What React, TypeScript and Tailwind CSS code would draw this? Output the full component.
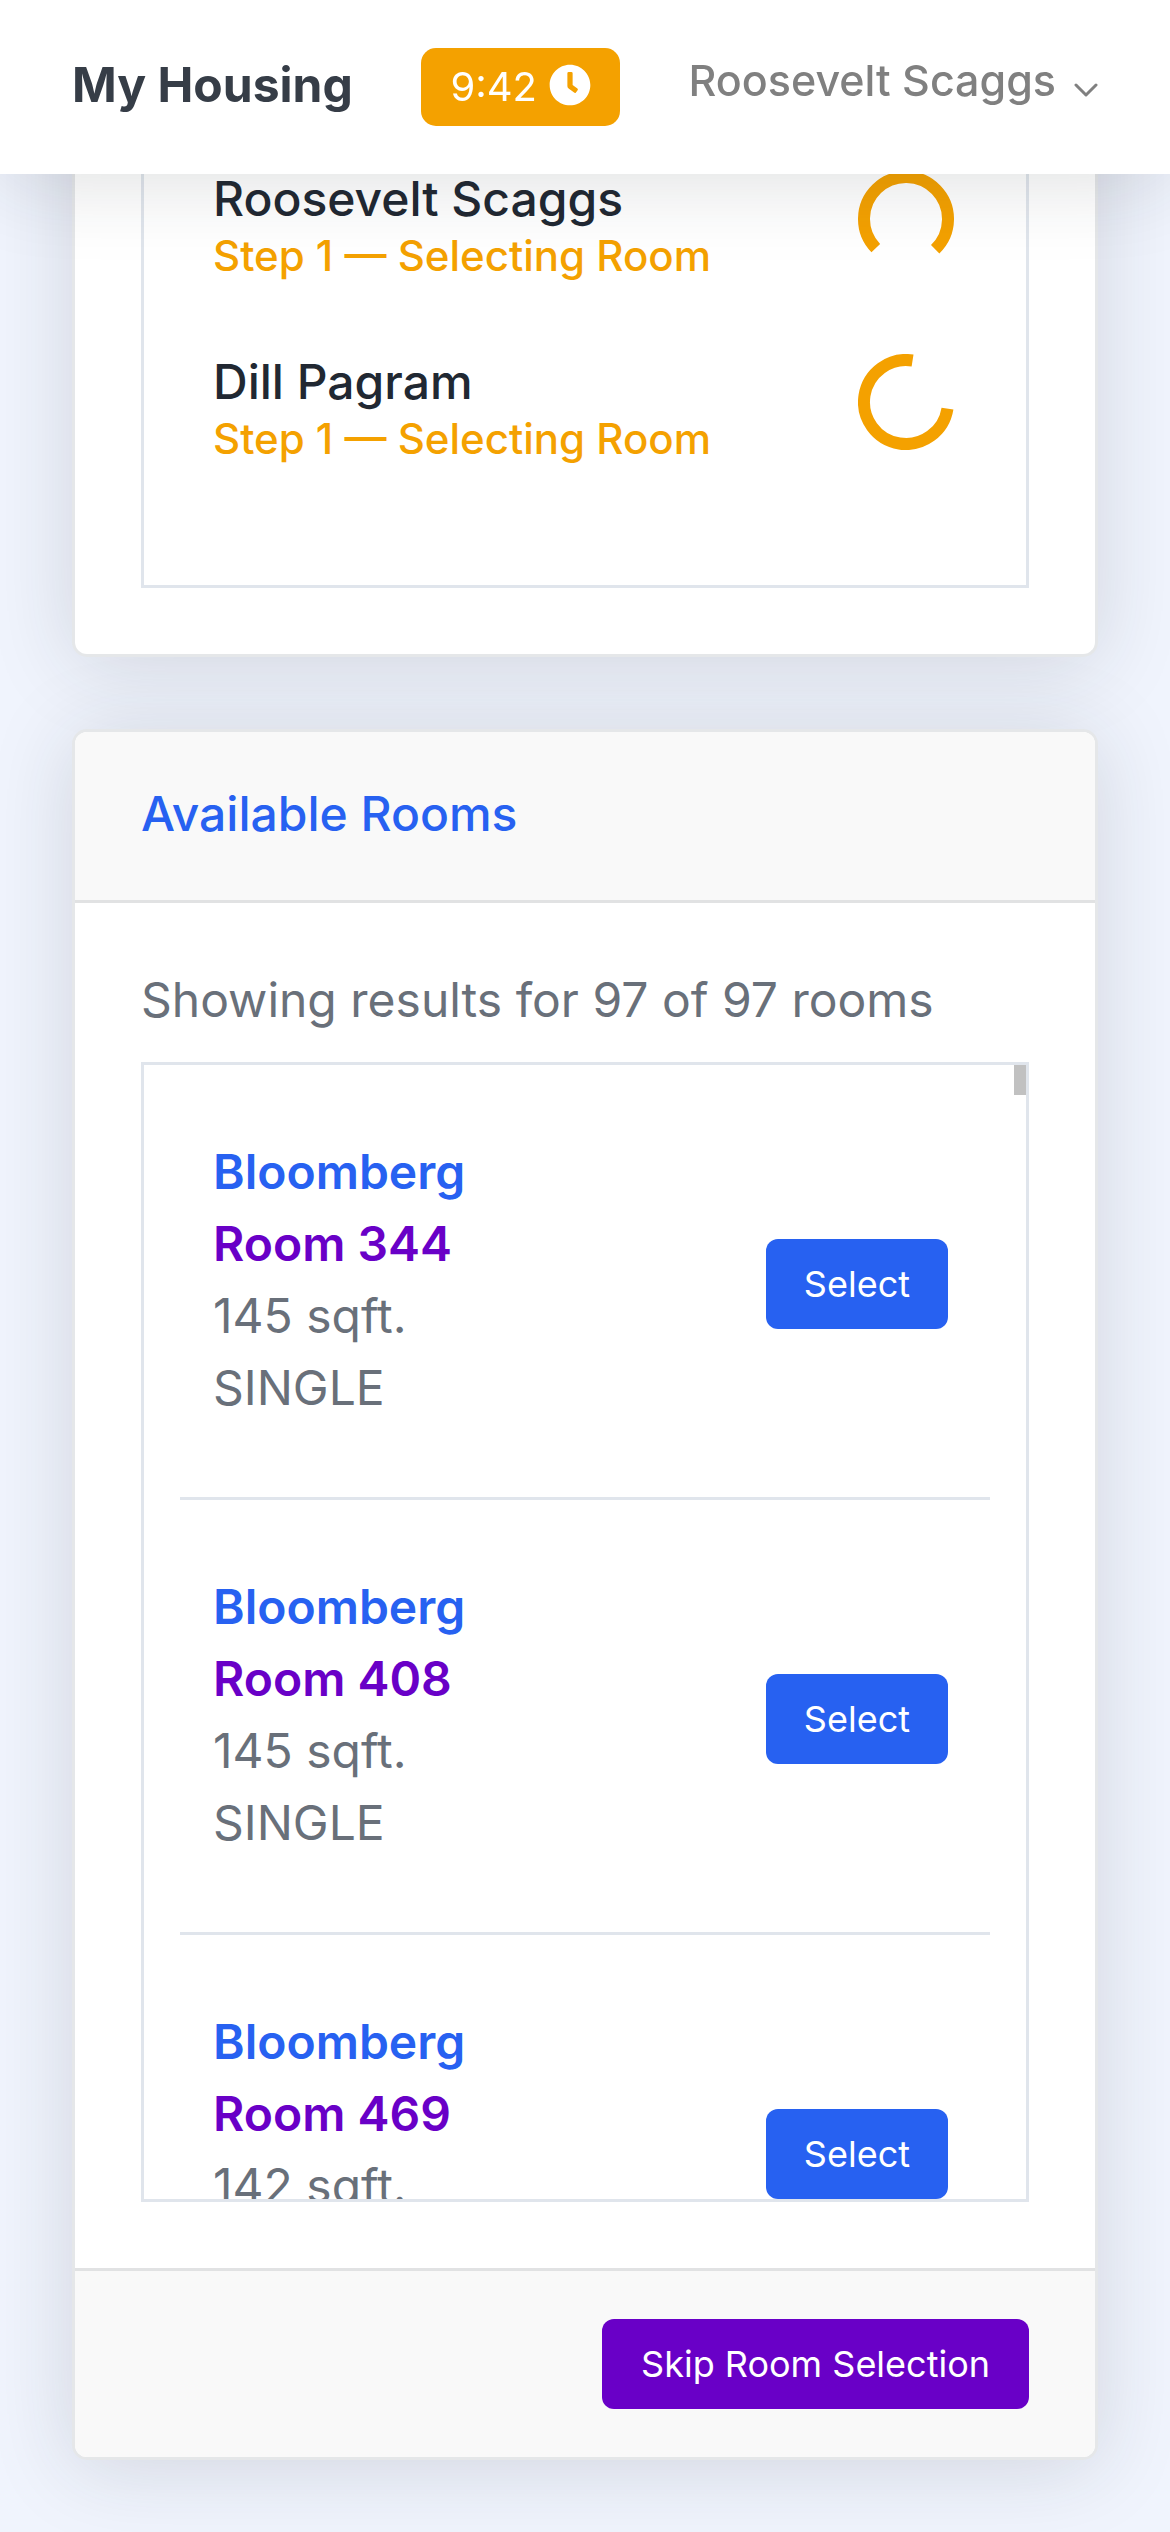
import { FaClock } from "react-icons/fa";

const members = [
  { name: "Roosevelt Scaggs", status: "Step 1 — Selecting Room", turn: 136 },
  { name: "Dill Pagram", status: "Step 1 — Selecting Room", turn: 9 },
];

const rooms = [
  { hall: "Bloomberg", room: "Room 344", area: "145 sqft.", kind: "SINGLE" },
  { hall: "Bloomberg", room: "Room 408", area: "145 sqft.", kind: "SINGLE" },
  { hall: "Bloomberg", room: "Room 469", area: "142 sqft.", kind: "SINGLE" },
];

const cardShadow = "shadow-[0_7px_84px_0_rgba(33,40,50,0.15)]";

/* Three-quarter ring; `turn` is the clockwise angle at which the gap opens. */
function Spinner({ turn }: { turn: number }) {
  return (
    <svg role="status" aria-label="In progress" viewBox="0 0 96 96" className="size-24 shrink-0">
      <path
        d="M90 48A42 42 0 1 1 48 6"
        fill="none"
        stroke="#f4a100"
        strokeWidth="12"
        transform={`rotate(${turn} 48 48)`}
      />
    </svg>
  );
}

function TopBar() {
  return (
    <header className="fixed inset-x-0 top-0 z-10 flex h-[174px] items-center justify-between bg-white px-[72px] shadow-[0_7px_84px_0_rgba(33,40,50,0.15)]">
      <h1 className="pb-1 text-[48px] leading-[72px] font-bold text-[#363d47]">My Housing</h1>
      <div className="flex h-[78px] items-center gap-3 rounded-[15px] bg-[#f4a100] px-[29px] text-[40px] text-white">
        <span>9:42</span>
        <FaClock className="mb-1 size-[42px]" aria-hidden="true" />
      </div>
      <button type="button" className="mb-[14px] flex items-center gap-[18px] text-[43px] leading-[60px] font-medium text-[#808080]">
        Roosevelt Scaggs
        <svg viewBox="0 0 24 14" className="mt-5 h-[14px] w-6" aria-hidden="true">
          <path d="M2 2l10 10L22 2" fill="none" stroke="currentColor" strokeWidth="3" strokeLinecap="round" strokeLinejoin="round" />
        </svg>
      </button>
    </header>
  );
}

export default function App() {
  return (
    <div className="min-h-screen overflow-x-hidden bg-[#f0f4fd] font-['Inter',sans-serif] text-[48px] leading-[72px] text-[#69707a]">
      <TopBar />
      <main className="flex flex-col gap-[72px] px-[72px] pb-[72px]">
        <section aria-label="Group members" className={`rounded-b-[15px] border-[3px] border-t-0 border-[#e5e7e9] bg-white px-[66px] pb-[66px] ${cardShadow}`}>
          <ul className="border-[3px] border-t-0 border-[#e0e5ec] pt-[127px] pr-[72px] pb-[92px] pl-[69px]">
            {members.map((m) => (
              <li key={m.name} className="flex h-[183px] items-center justify-between">
                <div className="pt-[14px]">
                  <p className="leading-[60px] font-medium text-[#212832]">{m.name}</p>
                  <p className="text-[42px] leading-[54px] font-medium text-[#f4a100]">{m.status}</p>
                </div>
                <Spinner turn={m.turn} />
              </li>
            ))}
          </ul>
        </section>

        <section className={`rounded-[15px] border-[3px] border-[#e5e7e9] bg-white ${cardShadow}`}>
          <h2 className="rounded-t-xl border-b-[3px] border-[#e1e2e3] bg-[#f9f9f9] px-[66px] pt-[46px] pb-[50px] font-medium text-[#2761f1]">
            Available Rooms
          </h2>
          <div className="px-[66px] pt-[61px] pb-[66px]">
            <p className="pb-[26px]">Showing results for 97 of 97 rooms</p>
            <div className="relative border-[3px] border-[#e0e5ec]">
              <ul className="h-[1134px] divide-y-[3px] divide-[#e0e5ec] overflow-y-auto px-9 [scrollbar-width:none]">
                {rooms.map((r) => (
                  <li key={r.room} className="flex items-center justify-between pt-[71px] pr-[42px] pb-[73px] pl-[33px]">
                    <div>
                      <p className="font-semibold text-[#2761f1]">{r.hall}</p>
                      <p className="font-semibold text-[#6900c7]">{r.room}</p>
                      <p>{r.area}</p>
                      <p>{r.kind}</p>
                    </div>
                    <button type="button" className="mt-2 h-[90px] rounded-xl bg-[#2761f1] px-[38px] text-[36px] leading-[48px] text-white">
                      Select
                    </button>
                  </li>
                ))}
              </ul>
              <div className="absolute top-0 right-0 h-[30px] w-3 bg-[#c1c1c1]" />
            </div>
          </div>
          <div className="flex justify-end rounded-b-xl border-t-[3px] border-[#e1e2e3] bg-[#f9f9f9] px-[66px] py-12">
            <button type="button" className="h-[90px] rounded-xl bg-[#6900c7] px-[39px] text-[36px] leading-[48px] text-white">
              Skip Room Selection
            </button>
          </div>
        </section>
      </main>
    </div>
  );
}
